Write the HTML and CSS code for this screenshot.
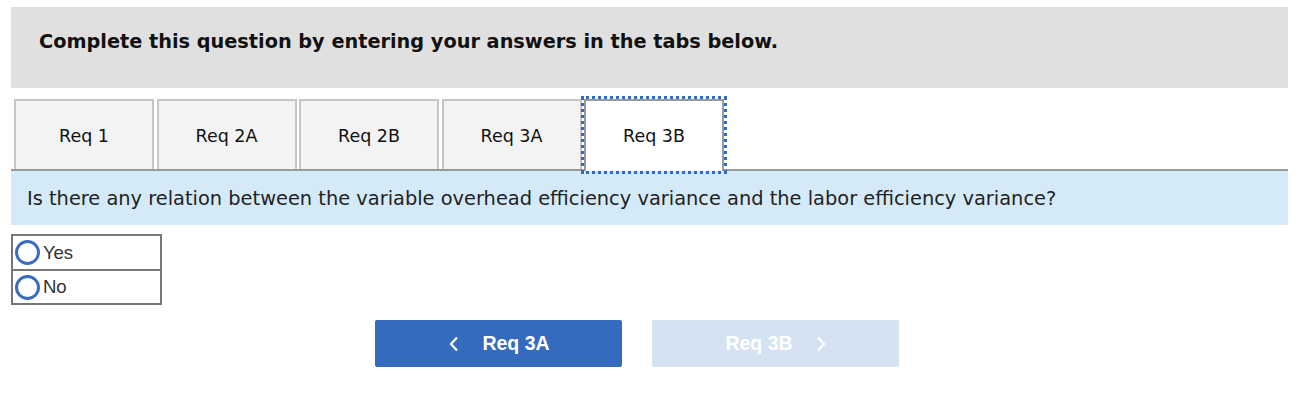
FILE: index.html
```html
<!DOCTYPE html>
<html lang="en">
<head>
<meta charset="utf-8">
<title>Question</title>
<link rel="stylesheet" href="styles.css">
</head>
<body>
<div class="page">
  <div class="instructions">Complete this question by entering your answers in the tabs below.</div>

  <div class="tablist">
    <div class="tab">Req 1</div>
    <div class="tab">Req 2A</div>
    <div class="tab">Req 2B</div>
    <div class="tab">Req 3A</div>
    <div class="tab tab-active">Req 3B</div>
  </div>

  <div class="question">Is there any relation between the variable overhead efficiency variance and the labor efficiency variance?</div>

  <div class="choices">
    <div class="choice"><span class="radio"></span><span class="choice-label">Yes</span></div>
    <div class="choice"><span class="radio"></span><span class="choice-label">No</span></div>
  </div>

  <div class="nav">
    <div class="btn btn-prev">
      <svg class="chev" width="10" height="16" viewBox="0 0 10 16"><polyline points="8,1.5 2,8 8,14.5" fill="none" stroke="#fff" stroke-width="2.2"/></svg>
      <span>Req 3A</span>
    </div>
    <div class="btn btn-next">
      <span>Req 3B</span>
      <svg class="chev" width="10" height="16" viewBox="0 0 10 16"><polyline points="2,1.5 8,8 2,14.5" fill="none" stroke="#fff" stroke-width="2.2"/></svg>
    </div>
  </div>
</div>
</body>
</html>
```

FILE: styles.css
```css
* { box-sizing: border-box; }

html, body {
  margin: 0;
  background: #fff;
}

.page {
  padding: 7px 23px 0 11px;
  font-family: "DejaVu Sans", Verdana, sans-serif;
  color: #222;
}

.instructions {
  background: #e0e0e0;
  height: 81px;
  padding: 22px 0 0 28px;
  font-size: 19.3px;
  font-weight: bold;
  color: #111;
  line-height: 26px;
}

.tablist {
  display: flex;
  align-items: flex-start;
  gap: 2.5px;
  margin-top: 11px;
  padding-left: 3px;
  border-bottom: 2px solid #999;
  height: 72px;
}

.tab {
  width: 140px;
  height: 70px;
  background: #f3f3f3;
  border: 2px solid #c6c6c6;
  border-bottom: none;
  display: flex;
  align-items: center;
  justify-content: center;
  font-size: 17.5px;
  color: #111;
  padding-top: 2px;
}

.tab-active {
  height: 72px;
  padding-top: 0;
  background: #fff;
  border-color: #999;
  outline: 3px dotted #346bbf;
  position: relative;
  z-index: 1;
}

.question {
  background: #d5eaf8;
  height: 54px;
  padding: 0 0 0 16px;
  display: flex;
  align-items: center;
  font-size: 19.4px;
  color: #222;
}

.choices {
  margin-top: 9px;
  width: 151px;
  border: 2px solid #777;
  border-bottom: none;
}

.choice {
  height: 35px;
  border-bottom: 2px solid #777;
  display: flex;
  align-items: center;
  padding-left: 2px;
  font-family: "Liberation Sans", Arial, sans-serif;
  font-size: 18.6px;
  color: #333;
  letter-spacing: -0.2px;
}

.choice:last-child {
  height: 34px;
}

.radio {
  width: 25px;
  height: 25px;
  border: 3px solid #3a6cc0;
  border-radius: 50%;
  margin-right: 3px;
  flex: none;
}

.nav {
  display: flex;
  gap: 30px;
  margin-top: 15px;
  padding-left: 364px;
}

.btn {
  width: 247px;
  height: 47px;
  border-radius: 2px;
  display: flex;
  align-items: center;
  justify-content: center;
  gap: 23px;
  font-family: "Liberation Sans", Arial, sans-serif;
  font-weight: bold;
  font-size: 19.5px;
  color: #fff;
}

.btn-prev {
  background: #346bbf;
  padding-left: 2px;
}

.btn-next {
  background: #d4e2f2;
}

.chev {
  display: block;
}
```
